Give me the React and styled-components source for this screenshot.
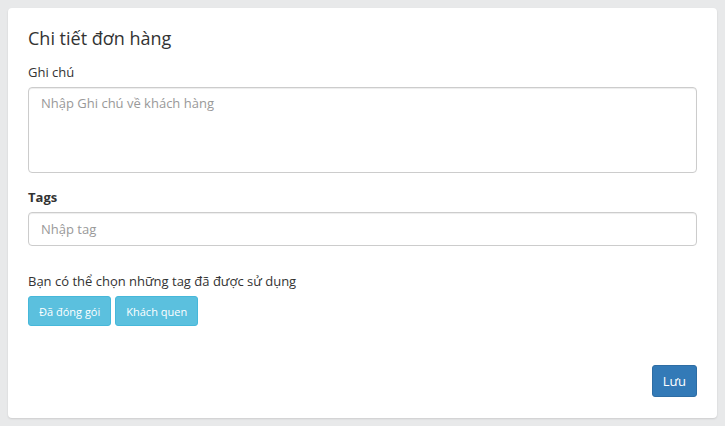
import React from 'react'
import styled, { createGlobalStyle } from 'styled-components';

const GlobalStyle = createGlobalStyle`
    html, body {
        margin: 0;
        background: #e8e9ea;
    }
    body {
        padding: 8px;
        font-family: "Open Sans", "Liberation Sans", sans-serif;
        font-size: 13px;
        color: #333;
    }
    * { box-sizing: border-box; }
`

const Card = styled.div`
    background: #fff;
    border-radius: 4px;
    box-shadow: 0 1px 2px rgba(0, 0, 0, 0.12);
    padding: 18px 20px 21px;
    display: flex;
    flex-direction: column;
    height: 410px;
`

const Title = styled.h2`
    margin: 0 0 13px;
    font-size: 18px;
    line-height: 24px;
    font-weight: 400;
    color: #333;
`

const Label = styled.label`
    display: block;
    margin-bottom: 5px;
    line-height: 19px;
    font-weight: ${p => (p.$bold ? 700 : 400)};
`

const Field = styled.div`
    margin-bottom: ${p => p.$gap || 0}px;
`

const TextArea = styled.textarea`
    display: block;
    width: 100%;
    height: 86px;
    resize: none;
    border: 1px solid #ccc;
    border-radius: 4px;
    padding: 6px 12px;
    font: inherit;
    font-size: 13px;
    line-height: 18px;
    color: #555;
    box-shadow: inset 0 1px 1px rgba(0, 0, 0, 0.075);
    &::placeholder { color: #999; }
`

const Input = styled.input`
    display: block;
    width: 100%;
    height: 34px;
    border: 1px solid #ccc;
    border-radius: 4px;
    padding: 6px 12px;
    font: inherit;
    font-size: 13px;
    color: #555;
    box-shadow: inset 0 1px 1px rgba(0, 0, 0, 0.075);
    &::placeholder { color: #999; }
`

const Hint = styled.p`
    margin: 0 0 5px;
    line-height: 19px;
`

const TagRow = styled.div`
    display: flex;
    gap: 4px;
`

const Button = styled.button`
    font-family: inherit;
    color: #fff;
    border-radius: 3px;
    cursor: pointer;
    background: ${p => (p.$primary ? '#337ab7' : '#5bc0de')};
    border: 1px solid ${p => (p.$primary ? '#2e6da4' : '#46b8da')};
    font-size: ${p => (p.$primary ? 13 : 11)}px;
    height: ${p => (p.$primary ? 32 : 30)}px;
    padding: 0 10px;
`

const Footer = styled.div`
    margin-top: auto;
    display: flex;
    justify-content: flex-end;
`

export default function App() {
    return (
        <>
            <GlobalStyle />
            <Card>
                <Title>Chi tiết đơn hàng</Title>
                <Field $gap={15}>
                    <Label>Ghi chú</Label>
                    <TextArea placeholder="Nhập Ghi chú về khách hàng" />
                </Field>
                <Field $gap={26}>
                    <Label $bold>Tags</Label>
                    <Input placeholder="Nhập tag" />
                </Field>
                <Hint>Bạn có thể chọn những tag đã được sử dụng</Hint>
                <TagRow>
                    <Button>Đã đóng gói</Button>
                    <Button>Khách quen</Button>
                </TagRow>
                <Footer>
                    <Button $primary>Lưu</Button>
                </Footer>
            </Card>
        </>
    )
}
